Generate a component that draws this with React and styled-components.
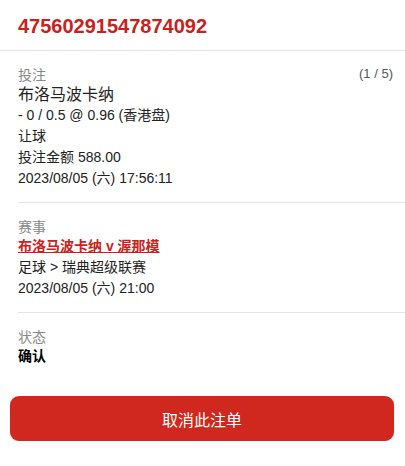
import styled, { createGlobalStyle } from "styled-components"

const GlobalStyle = createGlobalStyle`
  body {
    margin: 0;
    background: #fff;
    font-family: "Liberation Sans", Arial, "Noto Sans CJK SC", sans-serif;
    color: #222;
  }
`

const sections = [
  {
    label: '投注',
    counter: '(1 / 5)',
    lines: [
      { text: '布洛马波卡纳', kind: 'title' },
      { text: '- 0 / 0.5 @ 0.96 (香港盘)' },
      { text: '让球' },
      { text: '投注金额 588.00' },
      { text: '2023/08/05 (六) 17:56:11' },
    ],
  },
  {
    label: '赛事',
    lines: [
      { text: '布洛马波卡纳 v 渥那模', kind: 'link' },
      { text: '足球 > 瑞典超级联赛' },
      { text: '2023/08/05 (六) 21:00' },
    ],
  },
  {
    label: '状态',
    lines: [{ text: '确认', kind: 'bold' }],
  },
]

const App = () => {
  return (
    <>
      <GlobalStyle />
      <Page>
        <Header>
          <BetId>47560291547874092</BetId>
        </Header>
        {sections.map((s, i) => (
          <Section key={i} last={i === sections.length - 1}>
            <LabelRow>
              <Label>{s.label}</Label>
              {s.counter && <Counter>{s.counter}</Counter>}
            </LabelRow>
            {s.lines.map((l, j) => (
              <Line key={j} kind={l.kind}>{l.text}</Line>
            ))}
          </Section>
        ))}
        <ButtonWrap>
          <CancelButton>取消此注单</CancelButton>
        </ButtonWrap>
      </Page>
    </>
  )
}

const Page = styled.div`
  width: 405px;
  display: flex;
  flex-direction: column;
`

const Header = styled.div`
  height: 50px;
  display: flex;
  align-items: center;
  padding: 0 18px;
  border-bottom: 1px solid #e3e3e3;
`

const BetId = styled.div`
  color: #c9221d;
  font-size: 20px;
  font-weight: bold;
  padding-top: 2px;
`

const Section = styled.div`
  margin-left: 18px;
  padding: 12px 12px 13px 0;
  border-bottom: ${({ last }) => (last ? 'none' : '1px solid #e3e3e3')};
`

const LabelRow = styled.div`
  display: flex;
  justify-content: space-between;
  align-items: center;
  height: 21px;
`

const Label = styled.span`
  color: #888;
  font-size: 14px;
`

const Counter = styled.span`
  color: #555;
  font-size: 13px;
`

const Line = styled.div`
  line-height: 21px;
  font-size: ${({ kind }) => (kind === 'title' ? '16px' : '14px')};
  color: ${({ kind }) => (kind === 'link' ? '#c9221d' : kind === 'bold' ? '#000' : '#222')};
  font-weight: ${({ kind }) => (kind === 'link' || kind === 'bold' ? 'bold' : 'normal')};
  text-decoration: ${({ kind }) => (kind === 'link' ? 'underline' : 'none')};
`

const ButtonWrap = styled.div`
  padding: 16px 11px 0 10px;
`

const CancelButton = styled.button`
  width: 100%;
  height: 45px;
  border: none;
  border-radius: 9px;
  background: #d0271e;
  color: #fff;
  font-size: 16px;
  font-family: "Liberation Sans", Arial, "Noto Sans CJK SC", sans-serif;
  box-shadow: 0 1px 2px rgba(0, 0, 0, 0.15);
  cursor: pointer;
`

export default App
